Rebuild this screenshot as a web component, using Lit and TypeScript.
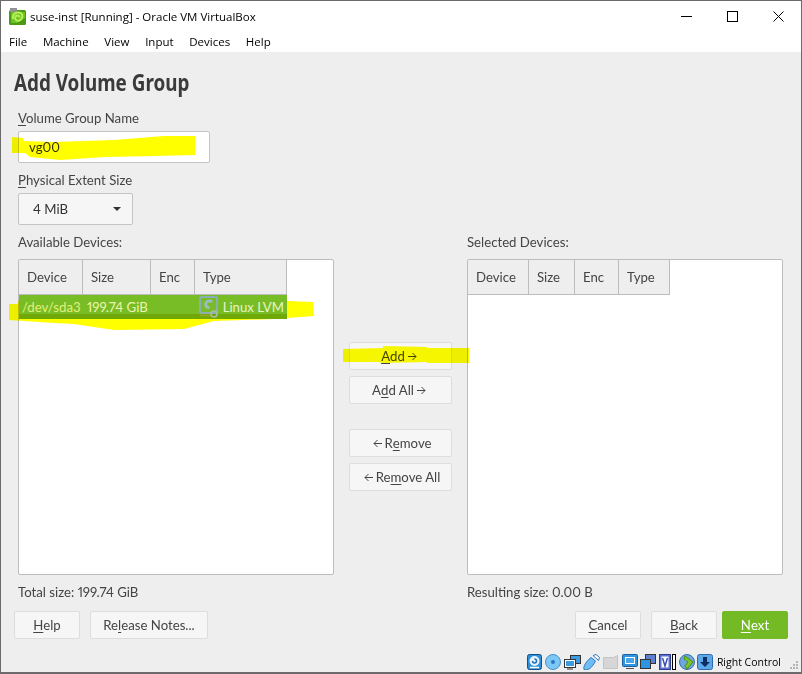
import { LitElement, css, html, svg } from "lit";
import { customElement } from "lit/decorators.js";

const suseIcon = html`<svg width="17" height="17" viewBox="0 0 17 17">
  <rect x="0" y="2" width="17" height="15" rx="1.500" fill="#4c9a14"/>
  <rect x="1" y="0" width="7" height="4" fill="#8f938f"/>
  <path d="M2 4h14v6L8 15H2z" fill="#6cc01f"/>
  <path d="M4 11c-1-4 2-7 6-6.500 3 .5 4 3 3 5.500-1 2.500-4 3.500-6 2-1.500-1.500-1-4 1-4.500 1.500-.3 2.500 .7 2.500 2" fill="none" stroke="#b8f05a" stroke-width="2"/>
</svg>`;

const lvmIcon = html`<svg class="lvm" width="20" height="23" viewBox="0 0 20 23">
  <rect x="1" y="2" width="17" height="16" rx="1.500" fill="none" stroke="#8aaeb4" stroke-width="2"/>
  <path d="M13 7c-1.500-1.500-5-1.500-6 1s.5 5 3.500 4.500" fill="none" stroke="#9bbcc0" stroke-width="3"/>
  <path d="M1 20.500h11" stroke="#9fa51a" stroke-width="1.500"/>
  <circle cx="15" cy="19" r="3" fill="none" stroke="#a9c0a0" stroke-width="1.500"/>
</svg>`;

const arrowRight = html`<svg class="arr" width="9" height="9" viewBox="0 0 9 9"><path d="M0 4.500h8M4.500 1l3.500 3.500L4.500 8" fill="none" stroke="#444"/></svg>`;
const arrowLeft = html`<svg class="arr" width="9" height="9" viewBox="0 0 9 9"><path d="M9 4.500H1M4.500 1L1 4.500 4.500 8" fill="none" stroke="#444"/></svg>`;

const statusIcons = [
  svg`<svg width="15" height="16" viewBox="0 0 15 16"><rect x=".5" y=".5" width="14" height="15" rx="2" fill="#2f8fd8" stroke="#174f8a"/><circle cx="7.500" cy="7" r="5" fill="#e6f2fb"/><path d="M7.500 5a2 2 0 1 1-2 2" fill="none" stroke="#1d6db5" stroke-width="1.500"/><path d="M3 13.500h9" stroke="#fff" stroke-width="1.500"/></svg>`,
  svg`<svg width="16" height="16" viewBox="0 0 16 16"><circle cx="8" cy="8" r="7.500" fill="#7cc8f4" stroke="#4a90cc"/><circle cx="8" cy="8" r="2" fill="#2c78c0"/></svg>`,
  svg`<svg width="17" height="16" viewBox="0 0 17 16"><rect x="6.500" y="1.500" width="10" height="8" fill="#3f9be0" stroke="#333"/><rect x=".5" y="5.500" width="11" height="8" fill="#fff" stroke="#333"/><rect x="2" y="7" width="8" height="5" fill="#3f9be0"/><path d="M3 15h6" stroke="#333"/></svg>`,
  svg`<svg width="17" height="16" viewBox="0 0 17 16"><path d="M1 15.500c-1-3 2-8 7-12l4.500 3.500c-3 6-7 10-11.500 8.500z" fill="#6fbdf2" stroke="#2c78c0"/><path d="M10 1.500l3-1 3.500 3-1 3z" fill="#fff" stroke="#2c78c0"/></svg>`,
  svg`<svg width="16" height="16" viewBox="0 0 16 16"><path d="M.5 3.500h10l4-2v13h-14z" fill="#d6d6d6" stroke="#c4c4c4"/></svg>`,
  svg`<svg width="16" height="16" viewBox="0 0 16 16"><rect x=".5" y=".5" width="15" height="12" rx="1" fill="#2f95e0" stroke="#1d5f9f"/><rect x="3" y="3" width="10" height="7" fill="#fff"/><rect x="4" y="4" width="8" height="5" fill="#4aa5e6"/><path d="M4 14.500h8" stroke="#555"/></svg>`,
  svg`<svg width="16" height="16" viewBox="0 0 16 16"><rect x="5.500" y=".5" width="10" height="9" fill="#5f7fd0" stroke="#333"/><rect x=".5" y="5.500" width="10" height="9" fill="#2f95e0" stroke="#333"/></svg>`,
  svg`<svg width="12" height="16" viewBox="0 0 12 16"><rect x=".5" y=".5" width="11" height="15" fill="#5a6fd0" stroke="#2f3f90"/><rect x="2.500" y="2.500" width="7" height="11" fill="#fff"/><path d="M3.500 4l2.500 8 2.500-8" fill="none" stroke="#3b4fb0" stroke-width="1.500"/></svg>`,
  svg`<svg class="caret" width="4" height="16" viewBox="0 0 4 16"><rect x=".5" y=".5" width="3" height="15" fill="#fff" stroke="#000"/></svg>`,
  svg`<svg width="16" height="16" viewBox="0 0 16 16"><circle cx="8" cy="8" r="7.500" fill="#6aa8e0" stroke="#3b6fa8"/><path d="M6 2l8 6-6 7-2-3 3-4-4-3z" fill="#7ec42a" stroke="#4f8f10"/></svg>`,
  svg`<svg width="16" height="16" viewBox="0 0 16 16"><rect x=".5" y=".5" width="15" height="15" rx="2" fill="#5fa8e8" stroke="#2a6cb0"/><path d="M6 3h4v5h3l-5 5-5-5h3z" fill="#0d2f66"/></svg>`,
];

@customElement("app-root")
export class AppRoot extends LitElement {
  static styles = css`
    :host {
      display: block;
      width: 802px;
      height: 674px;
      font-family: Lato, "Noto Sans", sans-serif;
      font-variant-numeric: proportional-nums;
      color: #333;
    }
    .window {
      box-sizing: border-box;
      height: 674px;
      border: 1px solid #6b6b6b;
      border-bottom-width: 2px;
      background: #eee;
      display: flex;
      flex-direction: column;
      position: relative;
      overflow: hidden;
    }
    .titlebar {
      height: 30px;
      flex: none;
      background: #fff;
      display: flex;
      align-items: center;
      padding-left: 8px;
      font: 11.5px "Open Sans", sans-serif;
      color: #000;
    }
    .titlebar .title {
      margin-left: 4px;
      flex: 1;
    }
    .winbtn {
      width: 46px;
      height: 30px;
      display: flex;
      align-items: center;
      justify-content: center;
    }
    .winbtns {
      display: flex;
    }
    .menubar {
      height: 21px;
      flex: none;
      background: #fff;
      display: flex;
      align-items: center;
      gap: 15.700px;
      padding-left: 8px;
      font: 11.5px "Open Sans", sans-serif;
      color: #000;
    }
    .page {
      flex: 1;
      display: flex;
      flex-direction: column;
      padding: 0 13px;
    }
    h1 {
      margin: 16px 0 0;
      height: 28px;
      font-family: "Noto Sans", sans-serif;
      font-size: 24px;
      line-height: 28px;
      font-weight: 700;
      color: #3a3a3a;
      transform: scaleX(0.785);
      transform-origin: left center;
      white-space: nowrap;
    }
    .form {
      padding: 0 5px 0 4px;
      flex: 1;
      display: flex;
      flex-direction: column;
    }
    .label,
    .panel-label,
    .totals {
      font-size: 13.200px;
      line-height: 18px;
      color: #444;
    }
    .first {
      margin-top: 13px;
    }
    u {
      text-underline-offset: 2px;
    }
    .input {
      box-sizing: border-box;
      width: 192px;
      height: 32px;
      margin-top: 4px;
      background: #fff;
      border: 1px solid #c4c4c4;
      border-radius: 2px;
      font-size: 13.200px;
      line-height: 30px;
      padding-left: 10px;
    }
    .extent {
      margin-top: 8px;
    }
    .select {
      box-sizing: border-box;
      width: 115px;
      height: 32px;
      margin-top: 4px;
      background: #f6f6f6;
      border: 1px solid #c4c4c4;
      border-radius: 2px;
      font-size: 13.200px;
      padding: 0 11px 0 14px;
      display: flex;
      align-items: center;
      justify-content: space-between;
    }
    .arrow {
      width: 0;
      height: 0;
      border: 4px solid transparent;
      border-top: 4px solid #333;
      border-bottom: 0;
    }
    .panels {
      display: grid;
      grid-template-columns: 316px 103px 316px;
      column-gap: 15px;
      margin-top: 8px;
    }
    .panel-label {
      height: 18px;
    }
    .table {
      box-sizing: border-box;
      height: 316px;
      margin-top: 8px;
      background: #fff;
      border: 1px solid #bcbcbc;
      border-radius: 2px;
      font-size: 13.200px;
    }
    .thead {
      display: inline-flex;
      height: 35px;
      background: #eee;
      border-bottom: 1px solid #bcbcbc;
      box-sizing: border-box;
      vertical-align: top;
    }
    .th {
      box-sizing: border-box;
      height: 34px;
      line-height: 34px;
      padding-left: 8px;
      border-right: 1px solid #bcbcbc;
      color: #444;
    }
    .row {
      box-sizing: border-box;
      width: 268px;
      height: 24px;
      background: linear-gradient(#78bd26 0 78%, #70a808 78% 100%);
      display: flex;
      align-items: center;
      line-height: 22px;
      position: relative;
      z-index: 1;
    }
    .row span {
      white-space: nowrap;
    }
    .dev {
      width: 65px;
      margin-left: 3px;
      color: #e2f07a;
    }
    .size {
      color: #eef4ad;
    }
    .type {
      margin-left: auto;
      margin-right: 3px;
      color: #e8f4c8;
    }
    .lvm {
      position: absolute;
      left: 180px;
      top: 0;
    }
    .mid {
      display: flex;
      flex-direction: column;
      margin-top: 109px;
    }
    .btn {
      box-sizing: border-box;
      height: 28px;
      background: #f6f6f6;
      border: 1px solid #ddd;
      border-radius: 2px;
      font-size: 13.200px;
      color: #444;
      display: flex;
      align-items: center;
      justify-content: center;
      white-space: pre;
    }
    .arr {
      margin: 1px 3px 0;
    }
    .mid .btn + .btn {
      margin-top: 6px;
    }
    .mid .gap {
      margin-top: 25px !important;
    }
    .totals {
      display: grid;
      grid-template-columns: 449px 316px;
      margin-top: 8px;
    }
    .footer {
      display: flex;
      margin-top: 10px;
      gap: 10px;
    }
    .footer .btn {
      width: 66px;
    }
    .footer .notes {
      width: 118px;
    }
    .spacer {
      flex: 1;
    }
    .footer .next {
      background: #73ba25;
      border-color: #73ba25;
      color: #fff;
      margin-left: -5px;
    }
    .status {
      height: 21px;
      margin-top: 12px;
      margin-right: -7px;
      display: flex;
      align-items: center;
      justify-content: flex-end;
      gap: 2.700px;
      padding-right: 14px;
      font: 10.500px "Open Sans", sans-serif;
      color: #000;
    }
    .status .caret {
      margin-left: -2px;
    }
    .status .rc {
      margin-left: 1px;
    }
    .marks {
      position: absolute;
      left: -1px;
      top: -1px;
      mix-blend-mode: multiply;
      pointer-events: none;
    }
    .grip {
      position: absolute;
      right: 2px;
      bottom: 2px;
    }
  `;

  private renderTable(widths: number[], withRow: boolean) {
    const names = ["Device", "Size", "Enc", "Type"];
    return html`<div class="table">
      <div class="thead">
        ${names.map((n, i) => html`<div class="th" style="width:${widths[i]}px">${n}</div>`)}
      </div>
      ${withRow
        ? html`<div class="row">
            <span class="dev">/dev/sda3</span>
            <span class="size">199.74 GiB</span>
            ${lvmIcon}
            <span class="type">Linux LVM</span>
          </div>`
        : ""}
    </div>`;
  }

  render() {
    return html`<div class="window">
      <div class="titlebar">
        ${suseIcon}
        <div class="title">suse-inst [Running] - Oracle VM VirtualBox</div>
        <div class="winbtns">
          <div class="winbtn"><svg width="11" height="11"><path d="M0 5.500h11" stroke="#000"/></svg></div>
          <div class="winbtn"><svg width="11" height="11"><rect x=".5" y=".5" width="10" height="10" fill="none" stroke="#000"/></svg></div>
          <div class="winbtn"><svg width="11" height="11"><path d="M.5 .5l10 10M10.500 .5l-10 10" stroke="#000"/></svg></div>
        </div>
      </div>
      <div class="menubar">
        <span>File</span><span>Machine</span><span>View</span><span>Input</span><span>Devices</span><span>Help</span>
      </div>
      <div class="page">
        <h1>Add Volume Group</h1>
        <div class="form">
          <div class="label first"><u>V</u>olume Group Name</div>
          <div class="input">vg00</div>
          <div class="label extent"><u>P</u>hysical Extent Size</div>
          <div class="select">4 MiB<span class="arrow"></span></div>
          <div class="panels">
            <div>
              <div class="panel-label">Available Devices:</div>
              ${this.renderTable([64, 68, 44, 92], true)}
            </div>
            <div class="mid">
              <div class="btn"><u>A</u>dd${arrowRight}</div>
              <div class="btn">A<u>d</u>d All${arrowRight}</div>
              <div class="btn gap">${arrowLeft}R<u>e</u>move</div>
              <div class="btn">${arrowLeft}Re<u>m</u>ove All</div>
            </div>
            <div>
              <div class="panel-label">Selected Devices:</div>
              ${this.renderTable([61, 46, 44, 51], false)}
            </div>
          </div>
          <div class="totals">
            <div>Total size: 199.74 GiB</div>
            <div>Resulting size: 0.00 B</div>
          </div>
        </div>
        <div class="footer">
          <div class="btn"><u>H</u>elp</div>
          <div class="btn notes">Re<u>l</u>ease Notes...</div>
          <div class="spacer"></div>
          <div class="btn"><u>C</u>ancel</div>
          <div class="btn"><u>B</u>ack</div>
          <div class="btn next"><u>N</u>ext</div>
        </div>
        <div class="status">
          ${statusIcons}
          <span class="rc">Right Control</span>
        </div>
      </div>
      <svg class="marks" width="802" height="674" viewBox="0 0 802 674" fill="#ffff00">
        <path d="M12 137l11 1 1 3 30 1 60-2 50-4 31 0 0 19-40 1-50 1-45 3-30-3-5-4-13 0z"/>
        <path d="M9 304l9 0 0-3 270 0 25 1 1 14-40 3-60 2-30 8-70 1-40-6-20-1-15-1-30-2z"/>
        <path d="M343 349l40-1 0-2 44 1 0 1 42 0 0 15-42 0 0-1-44 1-5-1-35 0z"/>
      </svg>
      <svg class="grip" width="9" height="9" viewBox="0 0 9 9" fill="#b5b5b5">
        <rect x="6" y="0" width="2" height="2"/><rect x="3" y="3" width="2" height="2"/><rect x="6" y="3" width="2" height="2"/>
        <rect x="0" y="6" width="2" height="2"/><rect x="3" y="6" width="2" height="2"/><rect x="6" y="6" width="2" height="2"/>
      </svg>
    </div>`;
  }
}
